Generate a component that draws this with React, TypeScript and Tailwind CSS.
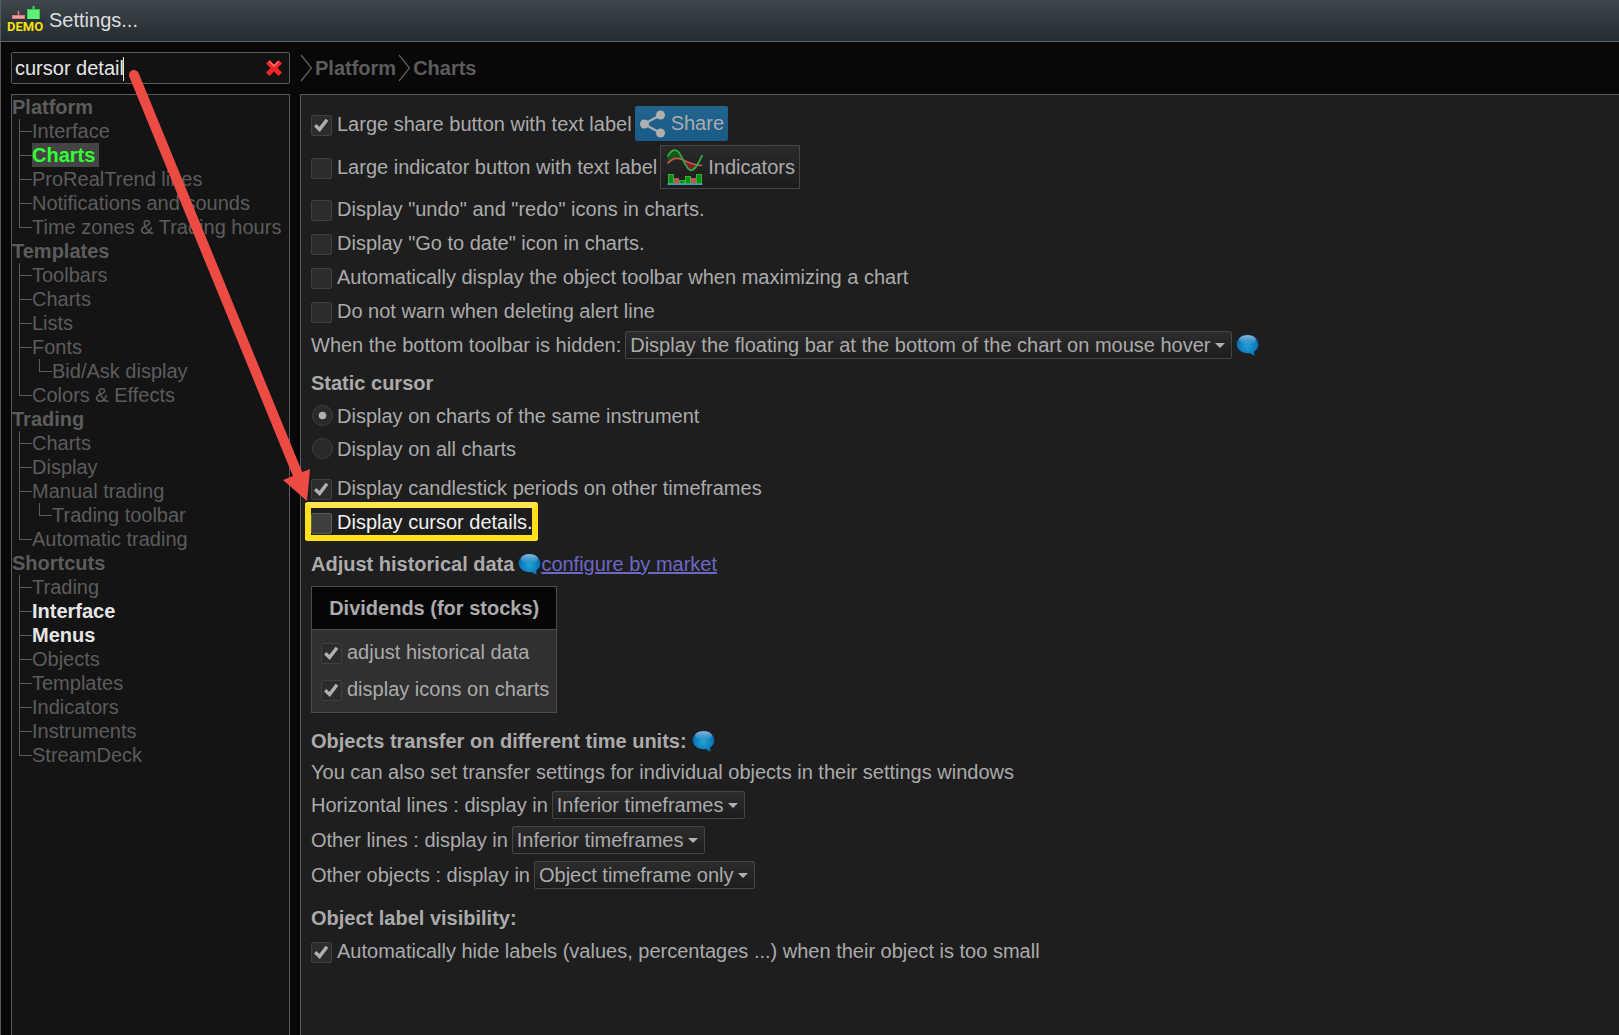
import type { ReactNode } from "react";

type Item = { label: string; children?: string[]; tone?: "active" | "match" };
type Group = { title: string; items: Item[] };

const groups: Group[] = [
  {
    title: "Platform",
    items: [
      { label: "Interface" },
      { label: "Charts", tone: "active" },
      { label: "ProRealTrend lines" },
      { label: "Notifications and sounds" },
      { label: "Time zones & Trading hours" },
    ],
  },
  {
    title: "Templates",
    items: [
      { label: "Toolbars" },
      { label: "Charts" },
      { label: "Lists" },
      { label: "Fonts", children: ["Bid/Ask display"] },
      { label: "Colors & Effects" },
    ],
  },
  {
    title: "Trading",
    items: [
      { label: "Charts" },
      { label: "Display" },
      { label: "Manual trading", children: ["Trading toolbar"] },
      { label: "Automatic trading" },
    ],
  },
  {
    title: "Shortcuts",
    items: [
      { label: "Trading" },
      { label: "Interface", tone: "match" },
      { label: "Menus", tone: "match" },
      { label: "Objects" },
      { label: "Templates" },
      { label: "Indicators" },
      { label: "Instruments" },
      { label: "StreamDeck" },
    ],
  },
];

function TreeNode({ item, last }: { item: Item; last: boolean }) {
  const tone =
    item.tone === "active"
      ? "bg-[#444444] pr-1 font-bold text-[#33ff33]"
      : item.tone === "match"
        ? "font-bold text-[#e6e6e6]"
        : "text-[#5c5c5c]";
  return (
    <li className="relative pl-[13px]">
      <span
        className={
          last
            ? "absolute left-0 top-0 h-3 border-l border-[#5c5c5c]"
            : "absolute bottom-0 left-0 top-0 border-l border-[#5c5c5c]"
        }
      />
      <span className="absolute left-0 top-3 w-[13px] border-t border-[#5c5c5c]" />
      <a href="#" className={`block w-fit whitespace-nowrap ${tone}`}>
        {item.label}
      </a>
      {item.children && (
        <ul className="pl-[7px]">
          {item.children.map((child, i) => (
            <TreeNode key={child} item={{ label: child }} last={i === item.children!.length - 1} />
          ))}
        </ul>
      )}
    </li>
  );
}

function Check({ label, checked, bright }: { label: string; checked?: boolean; bright?: boolean }) {
  return (
    <label className={bright ? "flex items-center gap-[5px] text-[#f0f0f0]" : "flex items-center gap-[5px]"}>
      <span className="relative mt-[3px] h-[21px] w-[21px] shrink-0">
        <input
          type="checkbox"
          defaultChecked={checked}
          className={
            bright
              ? "block h-full w-full appearance-none rounded-[2px] border border-[#5a5a5a] bg-[#3e3e3e]"
              : "block h-full w-full appearance-none rounded-[2px] border border-[#404040] bg-[#2c2c2c]"
          }
        />
        {checked && (
          <svg viewBox="0 0 21 21" className="pointer-events-none absolute inset-0 h-full w-full">
            <path d="M4.2 10.2 8.6 14.4 16 4.800" fill="none" stroke="#b0b0b0" strokeWidth="3.400" />
          </svg>
        )}
      </span>
      <span className="whitespace-nowrap">{label}</span>
    </label>
  );
}

function Radio({ label, checked }: { label: string; checked?: boolean }) {
  return (
    <label className="flex h-[33px] items-center gap-1">
      <span className="relative ml-px h-[21px] w-[21px] shrink-0">
        <input
          type="radio"
          name="static-cursor"
          defaultChecked={checked}
          className="block h-full w-full appearance-none rounded-full border border-[#404040] bg-[#2a2a2a]"
        />
        {checked && (
          <svg viewBox="0 0 21 21" className="pointer-events-none absolute inset-0 h-full w-full">
            <circle cx="10.500" cy="10.500" r="3.800" fill="#b0b0b0" />
          </svg>
        )}
      </span>
      <span className="whitespace-nowrap">{label}</span>
    </label>
  );
}

function Row({ children }: { children: ReactNode }) {
  return <div className="flex h-[34px] items-center">{children}</div>;
}

function Choice({ id, label, value }: { id: string; label: string; value: string }) {
  return (
    <>
      <label htmlFor={id} className="whitespace-nowrap">
        {label}
      </label>
      <span className="relative ml-1 flex">
        <select
          id={id}
          className="h-7 appearance-none rounded-[2px] border border-[#454545] bg-linear-to-b from-[#2c2c2c] to-[#1d1d1d] pl-1 pr-5"
        >
          <option>{value}</option>
        </select>
        <svg viewBox="0 0 10 5" className="pointer-events-none absolute right-[7px] top-3 h-[5px] w-[10px]">
          <path d="M0 0H10L5 5Z" fill="#b0b0b0" />
        </svg>
      </span>
    </>
  );
}

function Bubble({ id }: { id: string }) {
  return (
    <svg viewBox="0 0 23 22" className="h-[22px] w-[23px] shrink-0" aria-label="Help">
      <defs>
        <radialGradient id={id} cx="0.5" cy="0.55" r="0.6">
          <stop offset="0" stopColor="#27a0cf" />
          <stop offset="0.6" stopColor="#0c7fc2" />
          <stop offset="1" stopColor="#0a5f9f" />
        </radialGradient>
        <linearGradient id={`${id}-shine`} x1="0" y1="0" x2="0" y2="1">
          <stop offset="0" stopColor="#b5cfe0" stopOpacity="0.8" />
          <stop offset="1" stopColor="#5fb0d8" stopOpacity="0.1" />
        </linearGradient>
      </defs>
      <path
        d="M11.5 0.7C17.5 0.7 22.3 4.9 22.3 10.200C22.300 13.300 20.800 15.800 18.200 17.400C18 19 18.300 20.400 19.200 21.600C16.800 21.200 15.200 20.300 14 18.900C7 20.200 0.700 16 0.700 10.200C0.700 4.900 5.500 0.700 11.500 0.700Z"
        fill={`url(#${id})`}
      />
      <ellipse cx="11.500" cy="5.800" rx="8.500" ry="4.500" fill={`url(#${id}-shine)`} />
    </svg>
  );
}

function Chevron() {
  return (
    <svg viewBox="0 0 13 28" className="h-7 w-[13px] shrink-0" fill="none" stroke="#5c5c5c" strokeWidth="1.300">
      <path d="M1 1 11.500 14 1 27" />
    </svg>
  );
}

function DemoLogo() {
  return (
    <svg viewBox="0 0 40 32" className="h-8 w-10 shrink-0" aria-label="Demo">
      <path d="M12.500 6V14" stroke="#e88080" strokeWidth="1.500" />
      <path d="M27.500 1V6" stroke="#3fdc5c" strokeWidth="2" />
      <rect x="6" y="10" width="13" height="5" fill="#e07a7c" />
      <rect x="7" y="11" width="11" height="2" fill="#f0a0a0" />
      <rect x="21" y="4" width="13" height="11" fill="#35cf50" />
      <rect x="22" y="5" width="11" height="9" fill="#62ee7a" />
      <rect x="0" y="14" width="39" height="14" fill="#2b3238" />
      <text
        x="1"
        y="26"
        fill="#f4e010"
        className="font-[Roboto,'Liberation_Sans',sans-serif] text-[13px] font-bold"
      >
        DEMO
      </text>
    </svg>
  );
}

function IndicatorIcon() {
  return (
    <svg viewBox="0 0 36 36" className="h-9 w-9">
      <path d="M0.700 7.500C4 1 8 -1 11.500 3C13 5 14.500 8 16 10.800C11 8 6 9 0.700 14.500Z" fill="#14561c" />
      <path d="M16 10.800C19 17 21.500 21.300 24 21.300C26.500 21.300 28 19 30 15.800C25 15 20 12.500 16 10.800Z" fill="#7a2226" />
      <path d="M0.700 14.500C6 8 10.500 8.500 15 10.500C21 13.500 28 16.500 35.300 16.500" fill="none" stroke="#c45456" strokeWidth="1.600" />
      <path
        d="M0.700 7.500C4 1 8.500 -1 12 3.500C16 9 19.500 21.300 24 21.300C28.500 21.300 32 13 35.300 6"
        fill="none"
        stroke="#35ac40"
        strokeWidth="1.700"
      />
      <g fill="#0b8f10" stroke="#2fb53a">
        <rect x="1.500" y="25.500" width="5" height="9" />
        <rect x="12.500" y="31.500" width="5" height="3" />
        <rect x="18.500" y="27.500" width="5" height="7" />
        <rect x="29.500" y="25.500" width="5" height="9" />
      </g>
      <rect x="7" y="29" width="5" height="6" fill="#c45456" />
      <rect x="24" y="29" width="5" height="6" fill="#c45456" />
      <path d="M0.500 35.200H35.500" stroke="#3fa0b8" strokeWidth="1.600" />
    </svg>
  );
}

export default function App() {
  return (
    <div className="relative flex h-screen flex-col overflow-hidden border-l border-[#5a5a5a] bg-[#080808] font-['Liberation_Sans',Arial,sans-serif] text-[20px] leading-6 text-[#ababab]">
      <header className="flex h-[42px] shrink-0 items-center border-b border-[#5f6468] bg-linear-to-b from-[#3e474d] to-[#242c31] pl-[5px]">
        <DemoLogo />
        <h1 className="pb-[2px] pl-[3px] text-[#dedede]">Settings...</h1>
      </header>

      <div className="flex shrink-0 items-center gap-[10px] pl-[10px] pt-[10px]">
        <div className="relative flex h-8 w-[279px] items-center rounded-[2px] border border-[#5a5a5a] bg-[#121212] pl-[3px] pr-[7px]">
          <input
            aria-label="Search settings"
            defaultValue="cursor detail"
            className="min-w-0 flex-1 bg-transparent text-[#e6e6e6] outline-none"
          />
          <span className="absolute left-[111px] top-1 h-6 w-px bg-[#e6e6e6]" />
          <button aria-label="Clear search">
            <svg viewBox="0 0 16 16" className="h-4 w-4">
              <path
                d="M3.500 0 8 4.500 12.500 0 16 3.500 11.500 8 16 12.500 12.500 16 8 11.500 3.500 16 0 12.500 4.500 8 0 3.500Z"
                fill="#f02626"
              />
              <path d="M3.500 1.500 8 6 12.500 1.500" fill="none" stroke="#ff7070" strokeWidth="1.500" />
            </svg>
          </button>
        </div>
        <nav className="flex items-center font-bold text-[#5c5c5c]">
          <Chevron />
          <a href="#" className="px-[2px]">
            Platform
          </a>
          <Chevron />
          <a href="#" className="px-[2px]">
            Charts
          </a>
        </nav>
      </div>

      <div className="flex min-h-0 flex-1 gap-[10px] pl-[10px] pt-[10px]">
        <aside className="w-[279px] shrink-0 border border-b-0 border-[#5a5a5a] bg-[#141414]">
          {groups.map((group) => (
            <section key={group.title}>
              <h2 className="font-bold text-[#5c5c5c]">{group.title}</h2>
              <ul className="pl-[7px]">
                {group.items.map((item, i) => (
                  <TreeNode key={item.label} item={item} last={i === group.items.length - 1} />
                ))}
              </ul>
            </section>
          ))}
        </aside>

        <main className="min-w-0 flex-1 border-l border-t border-[#5a5a5a] bg-[#1e1e1e] pl-[10px] pt-[11px]">
          <div className="flex h-[35px] items-center gap-[3px]">
            <Check label="Large share button with text label" checked />
            <button className="flex h-[35px] items-center gap-[5px] rounded-[2px] bg-linear-to-b from-[#21658f] to-[#1a5a86] px-1">
              <svg viewBox="0 0 27 28" className="h-7 w-[27px]" fill="#b0b0b0">
                <path d="M21.500 5 5 14 21.500 23" fill="none" stroke="#b0b0b0" strokeWidth="2" />
                <circle cx="5.500" cy="14" r="4.500" />
                <circle cx="21.500" cy="5" r="4.500" />
                <circle cx="21.500" cy="23" r="4.500" />
              </svg>
              <span className="pb-[2px]">Share</span>
            </button>
          </div>
          <div className="mb-[3px] mt-1 flex h-11 items-center gap-[3px]">
            <Check label="Large indicator button with text label" />
            <button className="flex h-11 items-center gap-[5px] border border-[#454545] bg-linear-to-b from-[#2a2a2a] to-[#1c1c1c] pl-[6px] pr-1">
              <IndicatorIcon />
              Indicators
            </button>
          </div>

          <Row>
            <Check label={'Display "undo" and "redo" icons in charts.'} />
          </Row>
          <Row>
            <Check label={'Display "Go to date" icon in charts.'} />
          </Row>
          <Row>
            <Check label="Automatically display the object toolbar when maximizing a chart" />
          </Row>
          <Row>
            <Check label="Do not warn when deleting alert line" />
          </Row>
          <Row>
            <Choice
              id="bottom-toolbar"
              label="When the bottom toolbar is hidden:"
              value="Display the floating bar at the bottom of the chart on mouse hover"
            />
            <span className="pl-1">
              <Bubble id="bubble-a" />
            </span>
          </Row>

          <h2 className="mb-[2px] mt-[7px] flex h-7 items-center font-bold">Static cursor</h2>
          <Radio label="Display on charts of the same instrument" checked />
          <Radio label="Display on all charts" />

          <div className="mt-[6px]">
            <Row>
              <Check label="Display candlestick periods on other timeframes" checked />
            </Row>
          </div>
          <div className="relative w-fit">
            <Row>
              <Check label="Display cursor details." bright />
            </Row>
            <span className="pointer-events-none absolute -bottom-[2px] -left-[6px] -right-[5px] -top-[3px] rounded-[3px] border-6 border-[#ffe01a] border-t-[#ffe650]" />
          </div>

          <div className="mt-2 flex h-[34px] items-center">
            <h2 className="pr-1 font-bold">Adjust historical data</h2>
            <Bubble id="bubble-b" />
            <a href="#" className="text-[#6c68c4] underline">
              configure by market
            </a>
          </div>

          <section className="mt-[5px] w-fit border border-[#4c4c4c] bg-[#303030]">
            <h3 className="flex h-[43px] items-center justify-center border-b border-[#4c4c4c] bg-[#060606] px-4 font-bold">
              Dividends (for stocks)
            </h3>
            <div className="flex flex-col gap-[13px] pb-[11px] pl-[9px] pr-[7px] pt-[10px]">
              <Check label="adjust historical data" checked />
              <Check label="display icons on charts" checked />
            </div>
          </section>

          <div className="mt-[14px] flex h-7 items-center">
            <h2 className="pr-[5px] font-bold">Objects transfer on different time units:</h2>
            <Bubble id="bubble-c" />
          </div>
          <p className="mb-1 mt-[5px]">
            You can also set transfer settings for individual objects in their settings windows
          </p>
          <div className="flex flex-col gap-px">
            <Row>
              <Choice id="horizontal-lines" label="Horizontal lines : display in" value="Inferior timeframes" />
            </Row>
            <Row>
              <Choice id="other-lines" label="Other lines : display in" value="Inferior timeframes" />
            </Row>
            <Row>
              <Choice id="other-objects" label="Other objects : display in" value="Object timeframe only" />
            </Row>
          </div>

          <h2 className="mb-[2px] mt-3 flex h-7 items-center font-bold">Object label visibility:</h2>
          <Row>
            <Check label="Automatically hide labels (values, percentages ...) when their object is too small" checked />
          </Row>
        </main>
      </div>

      <svg viewBox="0 0 320 510" className="pointer-events-none absolute left-0 top-0 h-[510px] w-80">
        <path d="M133 75 299 480" stroke="#ec4b44" strokeWidth="10" strokeLinecap="round" />
        <path d="M306 501 282 480 309 469Z" fill="#ec4b44" />
      </svg>
    </div>
  );
}
